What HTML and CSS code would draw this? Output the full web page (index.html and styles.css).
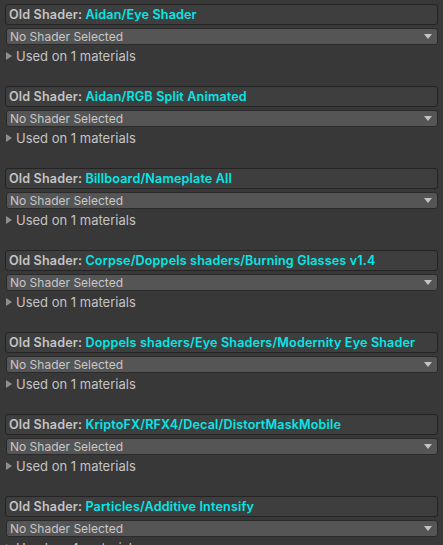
FILE: index.html
```html
<!DOCTYPE html>
<html>
<head>
<meta charset="utf-8">
<link rel="stylesheet" href="styles.css">
</head>
<body>
<div class="panel">
  <div class="entry">
    <div class="entry-title">Old Shader: <span class="shader-name">Aidan/Eye Shader</span></div>
    <div class="popup"><span>No Shader Selected</span><span class="popup-arrow"></span></div>
    <div class="foldout"><span class="fold-arrow"></span>Used on 1 materials</div>
  </div>
  <div class="entry">
    <div class="entry-title">Old Shader: <span class="shader-name">Aidan/RGB Split Animated</span></div>
    <div class="popup"><span>No Shader Selected</span><span class="popup-arrow"></span></div>
    <div class="foldout"><span class="fold-arrow"></span>Used on 1 materials</div>
  </div>
  <div class="entry">
    <div class="entry-title">Old Shader: <span class="shader-name">Billboard/Nameplate All</span></div>
    <div class="popup"><span>No Shader Selected</span><span class="popup-arrow"></span></div>
    <div class="foldout"><span class="fold-arrow"></span>Used on 1 materials</div>
  </div>
  <div class="entry">
    <div class="entry-title">Old Shader: <span class="shader-name">Corpse/Doppels shaders/Burning Glasses v1.4</span></div>
    <div class="popup"><span>No Shader Selected</span><span class="popup-arrow"></span></div>
    <div class="foldout"><span class="fold-arrow"></span>Used on 1 materials</div>
  </div>
  <div class="entry">
    <div class="entry-title">Old Shader: <span class="shader-name">Doppels shaders/Eye Shaders/Modernity Eye Shader</span></div>
    <div class="popup"><span>No Shader Selected</span><span class="popup-arrow"></span></div>
    <div class="foldout"><span class="fold-arrow"></span>Used on 1 materials</div>
  </div>
  <div class="entry">
    <div class="entry-title">Old Shader: <span class="shader-name">KriptoFX/RFX4/Decal/DistortMaskMobile</span></div>
    <div class="popup"><span>No Shader Selected</span><span class="popup-arrow"></span></div>
    <div class="foldout"><span class="fold-arrow"></span>Used on 1 materials</div>
  </div>
  <div class="entry">
    <div class="entry-title">Old Shader: <span class="shader-name">Particles/Additive Intensify</span></div>
    <div class="popup"><span>No Shader Selected</span><span class="popup-arrow"></span></div>
    <div class="foldout"><span class="fold-arrow"></span>Used on 4 materials</div>
  </div>
</div>
</body>
</html>
```

FILE: styles.css
```css
html, body {
  margin: 0;
  padding: 0;
  background: #383838;
  height: 100%;
  overflow: hidden;
}

.panel {
  font-family: Inter, "Noto Sans", sans-serif;
  color: #c4c4c4;
  padding: 0 5px;
}

.entry {
  display: flex;
  flex-direction: column;
  padding-top: 4px;
  padding-bottom: 17px;
}

.entry-title {
  box-sizing: border-box;
  height: 21px;
  border: 1px solid #242424;
  border-radius: 3px;
  background: #3e3e3e;
  font-size: 12.6px;
  font-weight: 600;
  letter-spacing: 0.15px;
  line-height: 19px;
  padding-left: 3px;
  white-space: nowrap;
  overflow: hidden;
}

.shader-name {
  color: #00e8e8;
}

.popup {
  box-sizing: border-box;
  height: 17px;
  margin-top: 3px;
  margin-left: 1px;
  border: 1px solid #2a2a2a;
  border-radius: 3px;
  background: #555555;
  font-size: 12px;
  line-height: 15px;
  padding: 0 4px 0 3px;
  display: flex;
  justify-content: space-between;
  align-items: center;
  color: #c8c8c8;
}

.popup-arrow {
  width: 0;
  height: 0;
  border-left: 4px solid transparent;
  border-right: 4px solid transparent;
  border-top: 5px solid #c4c4c4;
  margin-right: 1px;
}

.foldout {
  display: flex;
  align-items: center;
  height: 18px;
  margin-top: 2px;
  font-size: 13px;
  color: #c4c4c4;
}

.fold-arrow {
  width: 0;
  height: 0;
  margin-left: 1px;
  margin-right: 4px;
  border-top: 4px solid transparent;
  border-bottom: 4px solid transparent;
  border-left: 6px solid #8f8f8f;
}
```
